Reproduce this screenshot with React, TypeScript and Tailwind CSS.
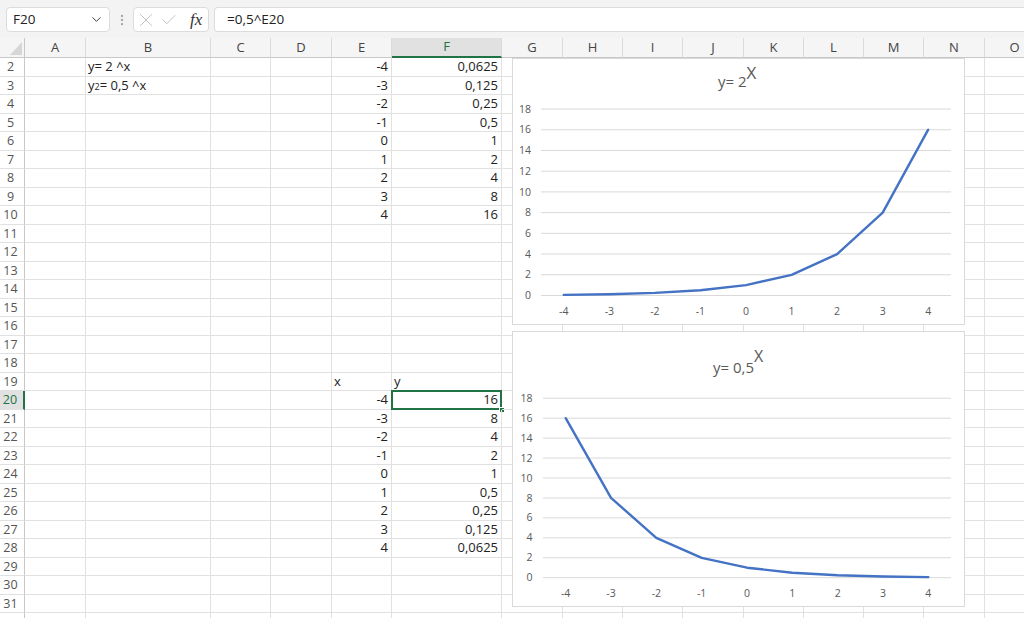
import React from 'react';
import { ChevronDown, EllipsisVertical, X, Check } from 'lucide-react';

const cols = [
  { key: 'A', w: 'w-[61px]' },
  { key: 'B', w: 'w-[125px]' },
  { key: 'C', w: 'w-[60px]' },
  { key: 'D', w: 'w-[61px]' },
  { key: 'E', w: 'w-[60px]' },
  { key: 'F', w: 'w-[110px]' },
  { key: 'G', w: 'w-[61px]' },
  { key: 'H', w: 'w-[60px]' },
  { key: 'I', w: 'w-[60px]' },
  { key: 'J', w: 'w-[61px]' },
  { key: 'K', w: 'w-[60px]' },
  { key: 'L', w: 'w-[60px]' },
  { key: 'M', w: 'w-[60px]' },
  { key: 'N', w: 'w-[61px]' },
  { key: 'O', w: 'w-[60px]' },
];

type Cell = { text: React.ReactNode; left?: boolean };
const cells: Record<number, Record<string, Cell>> = {
  2: { B: { text: 'y= 2 ^x', left: true }, E: { text: '-4' }, F: { text: '0,0625' } },
  3: {
    B: { text: <>y<span className="text-[9px]">2</span>= 0,5 ^x</>, left: true },
    E: { text: '-3' },
    F: { text: '0,125' },
  },
  4: { E: { text: '-2' }, F: { text: '0,25' } },
  5: { E: { text: '-1' }, F: { text: '0,5' } },
  6: { E: { text: '0' }, F: { text: '1' } },
  7: { E: { text: '1' }, F: { text: '2' } },
  8: { E: { text: '2' }, F: { text: '4' } },
  9: { E: { text: '3' }, F: { text: '8' } },
  10: { E: { text: '4' }, F: { text: '16' } },
  19: { E: { text: 'x', left: true }, F: { text: 'y', left: true } },
  20: { E: { text: '-4' }, F: { text: '16' } },
  21: { E: { text: '-3' }, F: { text: '8' } },
  22: { E: { text: '-2' }, F: { text: '4' } },
  23: { E: { text: '-1' }, F: { text: '2' } },
  24: { E: { text: '0' }, F: { text: '1' } },
  25: { E: { text: '1' }, F: { text: '0,5' } },
  26: { E: { text: '2' }, F: { text: '0,25' } },
  27: { E: { text: '3' }, F: { text: '0,125' } },
  28: { E: { text: '4' }, F: { text: '0,0625' } },
};

const rows = Array.from({ length: 31 }, (_, i) => i + 2);
const xs = [-4, -3, -2, -1, 0, 1, 2, 3, 4];

type ChartProps = {
  values: number[];
  h: number;
  plotL: number;
  plotR: number;
  zeroY: number;
  unit: number;
  labelR: number;
  xLabelY: number;
  titleX: number;
  titleY: number;
  title: string;
  supDy: number;
  supSize: number;
};

function Chart(p: ChartProps) {
  const step = (p.plotR - p.plotL) / 9;
  const cx = (i: number) => p.plotL + step * (i + 0.5);
  const cy = (v: number) => p.zeroY - v * p.unit;
  const pts = p.values.map((v, i) => `${cx(i).toFixed(1)},${cy(v).toFixed(1)}`).join(' ');
  return (
    <svg width={453} height={p.h} className="block" fontFamily="'Open Sans', sans-serif">
      <text x={p.titleX} y={p.titleY} fontSize={15} fill="#595959">
        {p.title}
        <tspan dy={p.supDy} fontSize={p.supSize}>X</tspan>
      </text>
      {[0, 2, 4, 6, 8, 10, 12, 14, 16, 18].map(v => (
        <g key={v}>
          <line x1={p.plotL} x2={p.plotR} y1={cy(v)} y2={cy(v)} stroke="#d9d9d9" strokeWidth={1} />
          <text x={p.labelR} y={cy(v) + 3.6} fontSize={10.5} fill="#595959" textAnchor="end">{v}</text>
        </g>
      ))}
      {xs.map((x, i) => (
        <text key={x} x={cx(i)} y={p.xLabelY} fontSize={10.5} fill="#595959" textAnchor="middle">{x}</text>
      ))}
      <polyline points={pts} fill="none" stroke="#4472c4" strokeWidth={2.4} strokeLinejoin="round" strokeLinecap="round" />
    </svg>
  );
}

export default function App() {
  return (
    <div className="w-[1024px] h-[618px] overflow-hidden bg-white font-['Open_Sans',sans-serif] text-[13px] text-[#222]">
      {/* formula bar */}
      <div className="h-[38px] bg-[#f3f3f3] flex items-start pt-[7px]">
        <div className="ml-[6px] w-[104px] h-[25px] bg-white border border-[#dcdcdc] rounded-[4px] flex items-center justify-between pl-[6px] pr-[5px]">
          <span className="text-[13.5px] text-[#222]">F20</span>
          <ChevronDown size={15} strokeWidth={1.6} className="text-[#444]" />
        </div>
        <div className="w-[23px] h-[25px] flex items-center justify-center">
          <EllipsisVertical size={14} strokeWidth={2} className="text-[#a6a6a6]" />
        </div>
        <div className="w-[76px] h-[25px] bg-white border border-[#dcdcdc] rounded-[4px] flex items-center pl-[1px] gap-[3px]">
          <X size={22} strokeWidth={0.9} className="text-[#b4b4b4]" />
          <Check size={18} strokeWidth={1.1} className="text-[#b4b4b4]" />
          <span className="ml-[9px] font-['Liberation_Serif',serif] italic text-[17px] text-[#333] leading-none">fx</span>
        </div>
        <div className="ml-[5px] flex-1 h-[25px] bg-white border border-[#dcdcdc] border-r-0 rounded-l-[4px] flex items-center pl-[12px]">
          <span className="text-[13.5px] text-[#222]">=0,5^E20</span>
        </div>
      </div>

      <div className="relative">
        {/* column headers */}
        <div className="flex h-[20px] bg-[#f5f5f5]">
          <div className="w-[25px] shrink-0 border-r border-b border-[#c8c8c8] relative">
            <div className="absolute right-[2px] bottom-[2px] w-0 h-0 border-l-[12px] border-l-transparent border-b-[13px] border-b-[#d6d6d6]" />
          </div>
          {cols.map(c => (
            <div
              key={c.key}
              className={`${c.w} shrink-0 flex items-center justify-center border-r border-[#dadada] ${c.key === 'F' ? 'bg-[#e1e1e1] text-[#217346] border-b-2 border-b-[#217346]' : 'text-[#444] border-b border-b-[#c8c8c8]'}`}
            >
              {c.key}
            </div>
          ))}
        </div>

        {/* rows */}
        {rows.map(r => (
          <div key={r} className="flex h-[18.5px] leading-[17px]">
            <div
              className={`w-[25px] shrink-0 border-b border-[#e1e1e1] flex items-center justify-center pr-[3px] text-[12.5px] ${r === 20 ? 'bg-[#e1e1e1] text-[#217346] border-r-2 border-r-[#217346]' : 'bg-white text-[#555] border-r border-r-[#c8c8c8]'}`}
            >
              {r < 32 ? r : ''}
            </div>
            {cols.map(c => {
              const cell = cells[r]?.[c.key];
              const selected = r === 20 && c.key === 'F';
              return (
                <div
                  key={c.key}
                  className={`${c.w} shrink-0 border-r border-b border-[#e1e1e1] relative whitespace-nowrap ${cell?.left ? 'text-left pl-[2px]' : 'text-right pr-[3px]'}`}
                >
                  {cell?.text}
                  {selected && (
                    <>
                      <div className="absolute -left-[1px] -top-[1px] -right-[1px] -bottom-[1px] border-2 border-[#217346]" />
                      <div className="absolute -right-[4px] -bottom-[4px] w-[6px] h-[6px] bg-[#217346] border border-white" />
                    </>
                  )}
                </div>
              );
            })}
          </div>
        ))}

        {/* charts */}
        <div className="absolute left-[512px] top-[20px] w-[453px] h-[267px] bg-white border border-[#d9d9d9]">
          <Chart
            values={[0.0625, 0.125, 0.25, 0.5, 1, 2, 4, 8, 16]}
            h={265}
            plotL={28}
            plotR={438}
            zeroY={236.5}
            unit={10.36}
            labelR={18}
            xLabelY={255.5}
            titleX={205}
            titleY={27.7}
            title="y= 2"
            supDy={-8}
            supSize={17}
          />
        </div>
        <div className="absolute left-[512px] top-[293px] w-[453px] h-[276px] bg-white border border-[#d9d9d9]">
          <Chart
            values={[16, 8, 4, 2, 1, 0.5, 0.25, 0.125, 0.0625]}
            h={274}
            plotL={30}
            plotR={438}
            zeroY={245.7}
            unit={9.97}
            labelR={19.5}
            xLabelY={264.5}
            titleX={200}
            titleY={40.7}
            title="y= 0,5"
            supDy={-11}
            supSize={16}
          />
        </div>
      </div>
    </div>
  );
}
